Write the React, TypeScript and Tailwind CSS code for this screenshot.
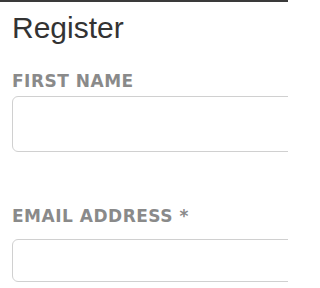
export default function App() {
  return (
    <div className="w-[288px] h-[288px] overflow-hidden bg-white border-t-2 border-[#3a3a3a]">
      <div className="pl-3 pt-[8px]">
        <h1 className="text-[30px] leading-[36px] text-[#333333] font-['Liberation_Sans',Arial,sans-serif]">
          Register
        </h1>

        <form className="mt-[26px]">
          <label className="block text-[17px] leading-[18px] font-bold tracking-[0.5px] text-[#8a8a8a] font-['DejaVu_Sans',sans-serif]">
            FIRST NAME
          </label>
          <input
            type="text"
            className="mt-[6px] block w-[300px] h-[56px] rounded-[6px] border border-[#d0d0d0] bg-white"
          />

          <label className="mt-[55px] block text-[17px] leading-[18px] font-bold tracking-[0.5px] text-[#8a8a8a] font-['DejaVu_Sans',sans-serif]">
            EMAIL ADDRESS *
          </label>
          <input
            type="email"
            className="mt-[14px] block w-[300px] h-[43px] rounded-[6px] border border-[#d0d0d0] bg-white"
          />
        </form>
      </div>
    </div>
  )
}
